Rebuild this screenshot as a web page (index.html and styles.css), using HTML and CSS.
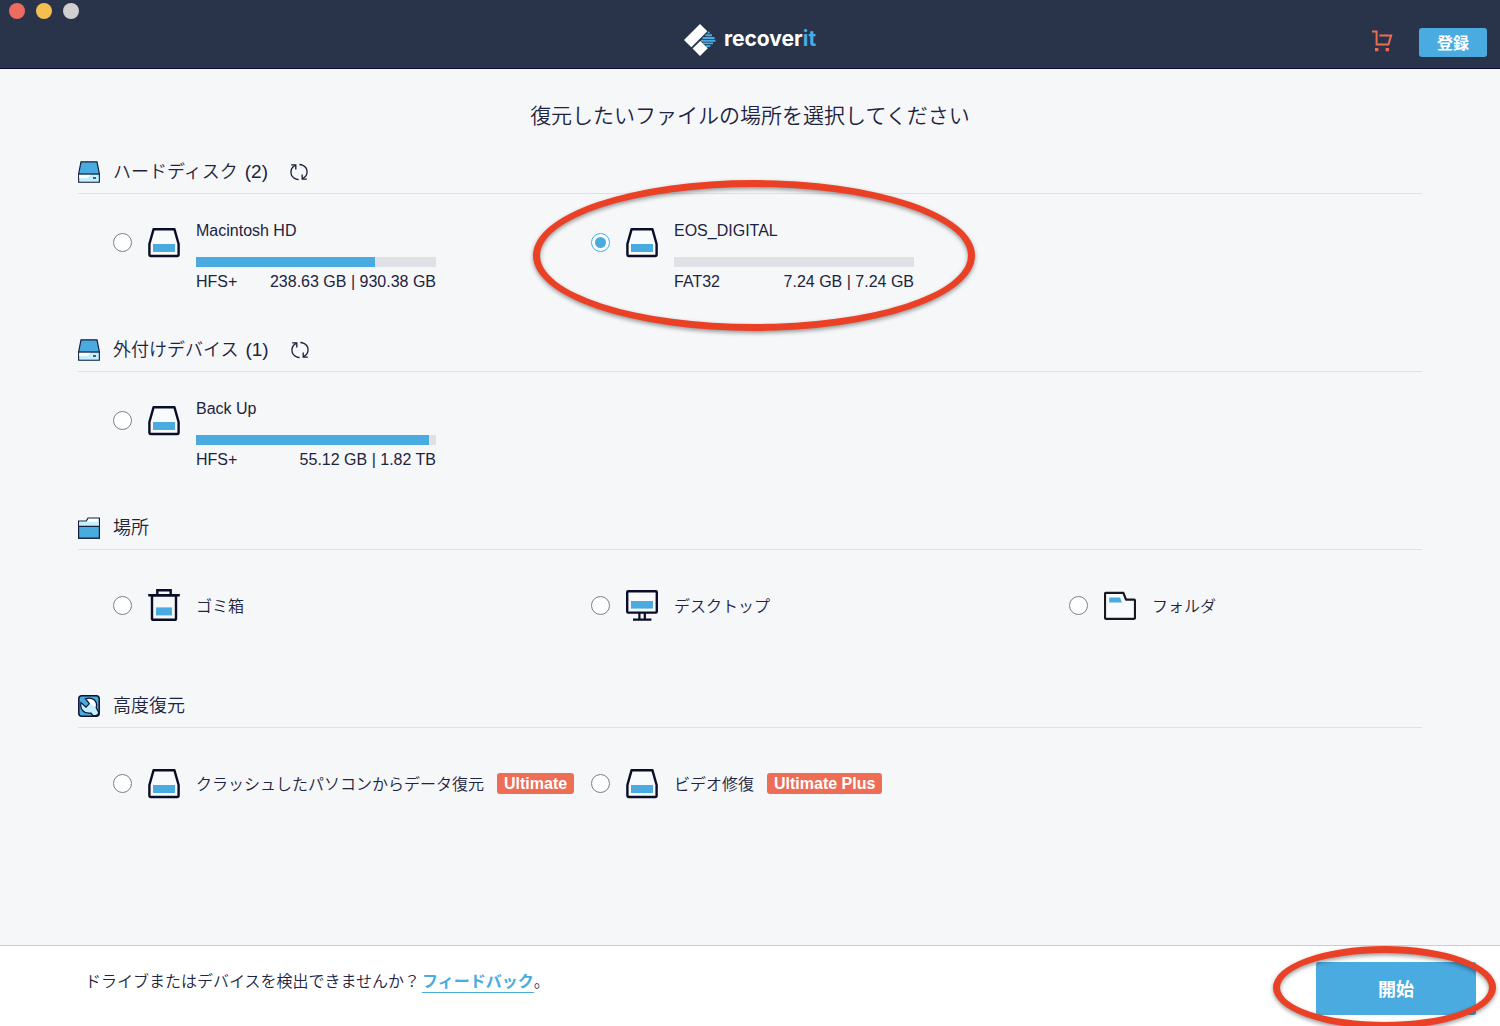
FILE: index.html
```html
<!DOCTYPE html>
<html lang="ja">
<head>
<meta charset="utf-8">
<meta name="viewport" content="width=device-width, initial-scale=1">
<title>recoverit</title>
<link rel="stylesheet" href="styles.css">
</head>
<body>
<svg class="sprite" aria-hidden="true">
  <symbol id="disk" viewBox="0 0 32 32">
    <path d="M5.6 3.2H26.4L30.6 18V28.6Q30.6 30 29.2 30H2.8Q1.4 30 1.4 28.6V18Z" fill="#f9fafb" stroke="#090d28" stroke-width="2.4" stroke-linejoin="round"/>
    <path d="M5 18H27V26H5Z" fill="#4aabe1"/>
  </symbol>
  <symbol id="drive" viewBox="0 0 22 22">
    <path d="M3 .8H19L21.3 12.5V21.2H.7V12.5Z" fill="#4aabe1" stroke="#15203c" stroke-width="1.2"/>
    <path d="M1.3 13.5H20.7V20.6H1.3Z" fill="#c4effe"/>
    <path d="M1.3 13.5H13L9.5 17H1.3Z" fill="#fff"/>
    <path d="M.7 13H21.3" stroke="#15203c" stroke-width="1.2"/>
    <path d="M15 17H18" stroke="#15203c" stroke-width="1.4"/>
  </symbol>
  <symbol id="refresh" viewBox="0 0 18 18">
    <g fill="none" stroke="#171c38" stroke-width="1.3">
      <path d="M5.4 2.4A7.9 7.4 0 0 0 5.6 15.8Q7 16.5 8.6 16.5"/>
      <path d="M1.2 1.9H5.8V6.6"/>
      <path d="M12.6 15.6A7.9 7.4 0 0 0 12.4 2.2Q11 1.5 9.4 1.5"/>
      <path d="M16.8 16.1H12.2V11.4"/>
    </g>
  </symbol>
</svg>

<header class="topbar">
  <div class="lights">
    <span class="light light-close"></span>
    <span class="light light-min"></span>
    <span class="light light-max"></span>
  </div>
  <div class="brand">
    <svg width="32" height="32" viewBox="0 0 32 32" aria-hidden="true">
      <path d="M16 0L23.3 7.3L7.3 23.3L0 16Z" fill="#fff"/>
      <path d="M16.3 17L23.8 24.3L16 32L8.6 24.6Z" fill="#fff"/>
      <path d="M23.6 8.6H25.6M21.3 11.3H28M18.6 14H30.6M17 16.7H31.4M19 19.4H29M22 22.1H26.4" stroke="#4aabe1" stroke-width="1.9"/>
    </svg>
    <span class="wordmark">recover<span class="accent">it</span></span>
  </div>
  <div class="actions">
    <button class="cart" aria-label="カート">
      <svg width="21" height="22" viewBox="0 0 21 22" aria-hidden="true">
        <path d="M0 1.4H4.6V14.6H16.4L19.2 5.4H7.4" fill="none" stroke="#ee6a50" stroke-width="2"/>
        <path d="M3 18H6.4V21.2H3ZM13.6 18H17V21.2H13.6Z" fill="#ee6a50"/>
      </svg>
    </button>
    <button class="register">登録</button>
  </div>
</header>

<main class="content">
  <h1 class="title">復元したいファイルの場所を選択してください</h1>

  <section class="group">
    <div class="group-head">
      <svg class="group-icon"><use href="#drive"/></svg>
      <h2>ハードディスク <span class="count">(2)</span></h2>
      <button class="refresh" aria-label="更新"><svg><use href="#refresh"/></svg></button>
    </div>
    <div class="options volumes">
      <label class="option">
        <input type="radio" name="source">
        <svg class="icon"><use href="#disk"/></svg>
        <span class="volume">
          <span class="name">Macintosh HD</span>
          <span class="bar"><span class="fill" style="width:74.4%"></span></span>
          <span class="meta"><span>HFS+</span><span>238.63 GB | 930.38 GB</span></span>
        </span>
      </label>
      <label class="option">
        <input type="radio" name="source" checked>
        <svg class="icon"><use href="#disk"/></svg>
        <span class="volume">
          <span class="name">EOS_DIGITAL</span>
          <span class="bar"><span class="fill" style="width:0%"></span></span>
          <span class="meta"><span>FAT32</span><span>7.24 GB | 7.24 GB</span></span>
        </span>
        <span class="ring ring-volume"></span>
      </label>
    </div>
  </section>

  <section class="group">
    <div class="group-head">
      <svg class="group-icon"><use href="#drive"/></svg>
      <h2>外付けデバイス <span class="count">(1)</span></h2>
      <button class="refresh" aria-label="更新"><svg><use href="#refresh"/></svg></button>
    </div>
    <div class="options volumes">
      <label class="option">
        <input type="radio" name="source">
        <svg class="icon"><use href="#disk"/></svg>
        <span class="volume">
          <span class="name">Back Up</span>
          <span class="bar"><span class="fill" style="width:97.2%"></span></span>
          <span class="meta"><span>HFS+</span><span>55.12 GB | 1.82 TB</span></span>
        </span>
      </label>
    </div>
  </section>

  <section class="group">
    <div class="group-head">
      <svg class="group-icon" viewBox="0 0 22 22">
        <path d="M.6 21.2V4H8.4L10 1H21.4V21.2Z" fill="#fff" stroke="#15203c" stroke-width="1.2"/>
        <path d="M1.2 5H20.8V9H1.2Z" fill="#c4effe"/>
        <path d="M.6 9.4H21.4V21.2H.6Z" fill="#4aabe1" stroke="#15203c" stroke-width="1.2"/>
      </svg>
      <h2>場所</h2>
    </div>
    <div class="options">
      <label class="option">
        <input type="radio" name="source">
        <svg class="icon" viewBox="0 0 32 32">
          <path d="M4 6.5H28V29.4Q28 30.8 26.6 30.8H5.4Q4 30.8 4 29.4ZM9.3 6V1.2H22.7V6M.2 6.3H31.8" fill="none" stroke="#090d28" stroke-width="2.4"/>
          <path d="M8 18.4H24V26.4H8Z" fill="#4aabe1"/>
        </svg>
        <span class="place">ゴミ箱</span>
      </label>
      <label class="option">
        <input type="radio" name="source">
        <svg class="icon" viewBox="0 0 32 32">
          <rect x="1.2" y="2.2" width="29.6" height="21.4" rx="1" fill="#f9fafb" stroke="#090d28" stroke-width="2.4"/>
          <path d="M5 12H27V19.6H5Z" fill="#4aabe1"/>
          <path d="M13.4 24V30M18.8 24V30M7 30.6H25.4" stroke="#090d28" stroke-width="2.2"/>
        </svg>
        <span class="place">デスクトップ</span>
      </label>
      <label class="option">
        <input type="radio" name="source">
        <svg class="icon" viewBox="0 0 32 32">
          <path d="M2 3.8H19.4L22 10.6H29.8Q31 10.6 31 11.8V28.6Q31 29.8 29.8 29.8H2Q1 29.8 1 28.8V4.8Q1 3.8 2 3.8Z" fill="#f9fafb" stroke="#15181f" stroke-width="2.2" stroke-linejoin="round"/>
          <path d="M5.2 8.4H16L18 13.4H5.2Z" fill="#4aabe1"/>
        </svg>
        <span class="place">フォルダ</span>
      </label>
    </div>
  </section>

  <section class="group">
    <div class="group-head">
      <svg class="group-icon" viewBox="0 0 22 22">
        <rect x=".8" y=".8" width="20.4" height="20.4" rx="3" fill="#4aabe1" stroke="#0d1430" stroke-width="1.5"/>
        <path d="M7.4 3.8Q12.5 2 16.2 4.8Q19.8 8.2 18.2 12.7L20.7 17.5Q20.5 20.5 17.5 20.6H15L12.8 18Q7.5 19 4.6 15.5Q2 12 3 7.6L8 12.2L11.4 8.6Z" fill="#c4effe" stroke="#0d1430" stroke-width="1.2"/>
        <path d="M9.6 4Q15 3.6 17 8V12L12 8.4Z" fill="#fff"/>
      </svg>
      <h2>高度復元</h2>
    </div>
    <div class="options">
      <label class="option">
        <input type="radio" name="source">
        <svg class="icon"><use href="#disk"/></svg>
        <span class="place">クラッシュしたパソコンからデータ復元</span>
        <span class="badge">Ultimate</span>
      </label>
      <label class="option">
        <input type="radio" name="source">
        <svg class="icon"><use href="#disk"/></svg>
        <span class="place">ビデオ修復</span>
        <span class="badge">Ultimate Plus</span>
      </label>
    </div>
  </section>
</main>

<footer class="footer">
  <p class="help">ドライブまたはデバイスを検出できませんか？<a href="#">フィードバック</a>。</p>
  <div class="start-wrap">
    <button class="start">開始</button>
    <span class="ring ring-start"></span>
  </div>
</footer>
</body>
</html>
```
FILE: styles.css
```css
* {
  box-sizing: border-box;
}

body {
  margin: 0;
  min-height: 100vh;
  display: flex;
  flex-direction: column;
  background: #f5f7f9;
  color: #1d2340;
  font: 350 16px/20px "Liberation Sans", "Noto Sans CJK JP", sans-serif;
}

h1,
h2,
p {
  margin: 0;
  font-weight: inherit;
}

button {
  border: 0;
  padding: 0;
  background: none;
  font: inherit;
  cursor: pointer;
}

svg {
  display: block;
  flex: none;
}

.sprite {
  position: absolute;
  width: 0;
  height: 0;
}

.topbar {
  display: grid;
  grid-template-columns: 1fr auto 1fr;
  height: 69px;
  background: #29344b;
  border-bottom: 1px solid #07093a;
}

.lights {
  display: flex;
  gap: 11px;
  padding: 3px 9px;
}

.light {
  width: 16px;
  height: 16px;
  border-radius: 50%;
}

.light-close { background: #ed6b60; }
.light-min { background: #f5bf4f; }
.light-max { background: #d0d0d0; }

.brand {
  display: flex;
  align-items: center;
  gap: 8px;
  padding-top: 11px;
}

.wordmark {
  padding-bottom: 2px;
  color: #fff;
  font: 700 21px/32px Inter, "Liberation Sans", sans-serif;
}

.accent {
  color: #4aabe1;
}

.actions {
  display: flex;
  justify-content: flex-end;
  align-items: center;
  gap: 26px;
  padding: 17px 13px 0 0;
}

.cart {
  padding-bottom: 4px;
}

.register {
  width: 68px;
  height: 29px;
  padding-top: 2px;
  border-radius: 3px;
  background: #4aabe1;
  color: #fff;
  font-weight: 700;
}

.content {
  flex: 1;
  padding: 31px 78px 0;
}

.title {
  margin-bottom: 18px;
  text-align: center;
  font-size: 21px;
  line-height: 32px;
}

.group {
  min-height: 178px;
}

.group-head {
  display: flex;
  align-items: center;
  height: 44px;
  border-bottom: 1px solid #dfe1e5;
}

.group-icon {
  width: 22px;
  height: 22px;
  margin-right: 13px;
}

.group-head h2 {
  font-size: 18px;
  line-height: 28px;
}

.count {
  margin-left: 2px;
  font-size: 19px;
}

.refresh {
  margin-left: 22px;
}

.refresh svg {
  width: 18px;
  height: 18px;
}

.options {
  display: grid;
  grid-template-columns: 478fr 478fr 353fr;
  padding: 39px 0 0 35px;
}

.volumes {
  padding-top: 27px;
}

.option {
  position: relative;
  display: flex;
  align-items: center;
  white-space: nowrap;
}

.volumes .option {
  align-items: flex-start;
}

.option input {
  appearance: none;
  display: grid;
  place-content: center;
  flex: none;
  width: 19px;
  height: 19px;
  margin: 0 16px 0 0;
  border: 1px solid #7a7e90;
  border-radius: 50%;
  background: #fff;
}

.option input:checked {
  border-color: #4aabe1;
}

.option input:checked::before {
  content: "";
  width: 11px;
  height: 11px;
  border-radius: 50%;
  background: #4aabe1;
}

.volumes input {
  margin-top: 12px;
}

.icon {
  width: 32px;
  height: 32px;
  margin-right: 16px;
}

.volumes .icon {
  margin-top: 5px;
}

.volume {
  display: flex;
  flex-direction: column;
  width: 240px;
}

.bar {
  height: 10px;
  margin: 16px 0 5px;
  background: #dfe1e6;
}

.fill {
  display: block;
  height: 100%;
  background: #4aabe1;
}

.meta {
  display: flex;
  justify-content: space-between;
}

.place {
  padding-top: 3px;
}

.badge {
  margin-left: 13px;
  padding: 0 7px;
  border-radius: 3px;
  background: #ed6d55;
  color: #fff;
  font-weight: 700;
  line-height: 21px;
}

.footer {
  position: relative;
  display: flex;
  justify-content: space-between;
  align-items: flex-start;
  padding: 16px 24px 11px 85px;
  border-top: 1px solid #c9ccd1;
  background: #fff;
  overflow: hidden;
}

.help {
  padding-top: 9px;
  line-height: 22px;
}

.help a {
  display: inline-block;
  margin-left: 2px;
  border-bottom: 1px solid #4aabe1;
  color: #4aabe1;
  font-weight: 700;
  line-height: 20px;
  text-decoration: none;
}

.start-wrap {
  position: relative;
}

.start {
  width: 160px;
  height: 53px;
  padding-top: 2px;
  border-radius: 2px;
  background: #4aabe1;
  color: #fff;
  font-size: 18px;
  font-weight: 700;
}

/* Red highlight laid over a control */
.ring {
  position: absolute;
  border: 7px solid #ea4025;
  border-radius: 50%;
  filter: drop-shadow(0 2px 2px rgba(0, 0, 0, 0.4));
  pointer-events: none;
}

.ring-volume {
  top: -41px;
  left: -58px;
  width: 442px;
  height: 151px;
}

.ring-start {
  top: -16px;
  left: -43px;
  width: 223px;
  height: 83px;
}
```
